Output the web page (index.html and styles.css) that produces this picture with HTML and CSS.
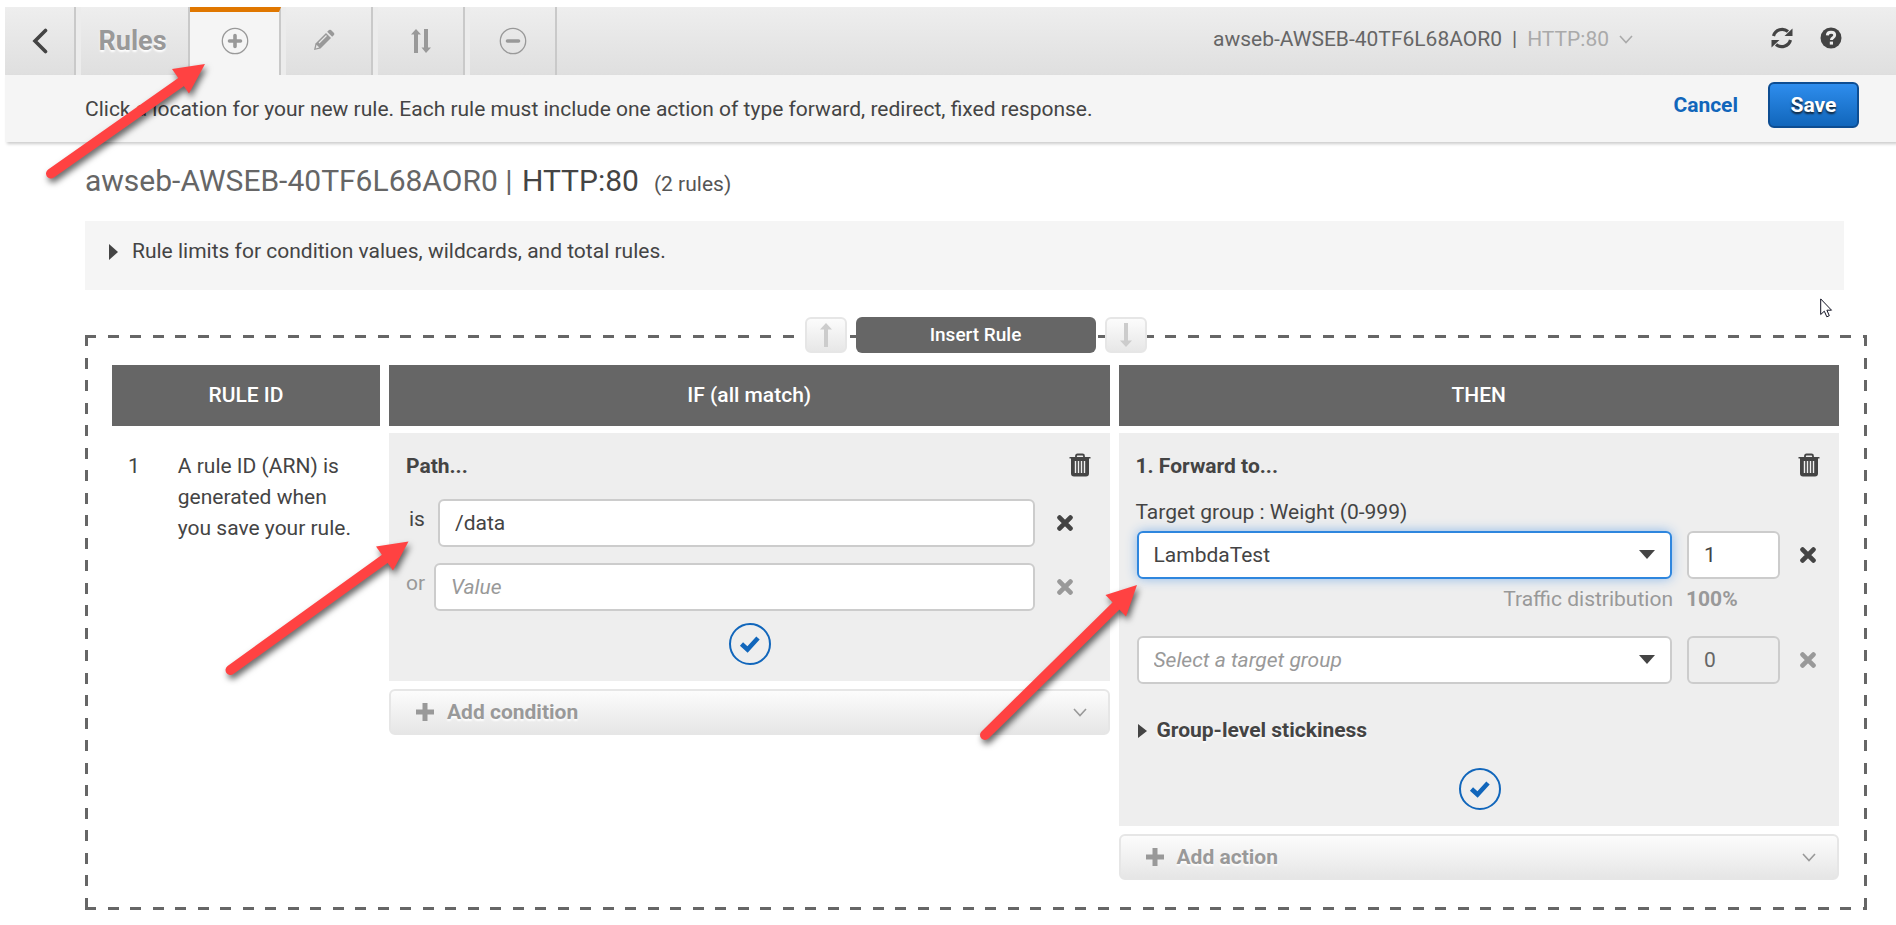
FILE: index.html
```html
<!DOCTYPE html>
<html lang="en">
<head>
<meta charset="utf-8">
<title>Rules | awseb-AWSEB-40TF6L68AOR0</title>
<link rel="stylesheet" href="styles.css">
</head>
<body>
<svg class="defs" width="0" height="0" aria-hidden="true">
  <symbol id="i-trash" viewBox="0 0 22 24">
    <path d="M7 4.500V3Q7 1.500 8.500 1.500H13.500Q15 1.500 15 3V4.500" fill="none" stroke="currentColor" stroke-width="1.800"/>
    <path d="M.5 4H21.500V5.600H20V20.500Q20 23.500 17 23.500H5Q2 23.500 2 20.500V5.600H.5Z" fill="currentColor"/>
    <path d="M6.500 8V20M9.500 8V20M12.500 8V20M15.500 8V20" stroke="#eee" stroke-width="1.400"/>
  </symbol>
  <symbol id="i-x" viewBox="0 0 16 16">
    <path d="M2.600 2.600L13.400 13.400M13.400 2.600L2.600 13.400" stroke="currentColor" stroke-width="4.800" stroke-linecap="round"/>
  </symbol>
  <symbol id="i-check" viewBox="0 0 22 18">
    <path d="M2.500 9L8.500 14.500L19 3" fill="none" stroke="currentColor" stroke-width="4.600"/>
  </symbol>
  <symbol id="i-plus" viewBox="0 0 18 18">
    <path d="M9 0V18M0 9H18" stroke="currentColor" stroke-width="5"/>
  </symbol>
  <symbol id="i-chevron" viewBox="0 0 14 9">
    <path d="M1 1L7 7.500L13 1" fill="none" stroke="currentColor" stroke-width="1.600"/>
  </symbol>
  <symbol id="i-arrow" viewBox="0 0 12 24">
    <path d="M6 0L12 6.500H8V24H4V6.500H0Z" fill="currentColor"/>
  </symbol>
</svg>

<div class="page">
  <header class="topbar">
    <nav class="tabs" aria-label="Rule tools">
      <button class="tab tab-back" aria-label="Back"><svg width="16" height="26" viewBox="0 0 16 26"><path d="M13.500 2.500L3 13L13.500 23.500" fill="none" stroke="#444" stroke-width="3.600" stroke-linecap="round"/></svg></button>
      <span class="tab tab-title">Rules</span>
      <button class="tab tab-active" aria-label="Add rule"><svg width="28" height="28" viewBox="0 0 28 28"><circle cx="14" cy="14" r="12.700" fill="none" stroke="#999" stroke-width="1.300"/><path d="M14 8.500V19.500M8.500 14H19.500" stroke="#999" stroke-width="3.600" stroke-linecap="round"/></svg></button>
      <button class="tab tab-edit" aria-label="Edit rules"><svg width="22" height="22" viewBox="0 0 22 22"><path d="M1 21L2.500 14.500L13 4L18 9L7.500 19.500Z" fill="#999"/><path d="M14.200 2.800L16 1Q17 .3 18 1L21 4Q21.700 5 21 6L19.200 7.800Z" fill="#999"/><path d="M2.600 19.400L3.600 15.800L6.200 18.400Z" fill="#e6e6e6"/><path d="M6 14L13.500 6.500" stroke="#e6e6e6" stroke-width="1.200"/></svg></button>
      <button class="tab" aria-label="Reorder rules"><svg width="20" height="26" viewBox="0 0 20 26"><path d="M5 1L10 6.500H7V25H3V6.500H0ZM15 25L20 19.500H17V1H13V19.500H10.500Z" fill="#999"/></svg></button>
      <button class="tab" aria-label="Delete rules"><svg width="28" height="28" viewBox="0 0 28 28"><circle cx="14" cy="14" r="12.700" fill="none" stroke="#999" stroke-width="1.300"/><path d="M8.500 14H19.500" stroke="#999" stroke-width="3.600" stroke-linecap="round"/></svg></button>
    </nav>
    <div class="top-right">
      <button class="listener"><span>awseb-AWSEB-40TF6L68AOR0</span><span>|</span><span class="pale">HTTP:80</span><svg class="pale" width="14" height="9"><use href="#i-chevron"/></svg></button>
      <button class="icon-btn" aria-label="Refresh"><svg width="22" height="22" viewBox="0 0 22 22"><path d="M2.500 9A9 9 0 0 1 17 4.500M19.500 13A9 9 0 0 1 5 17.500" fill="none" stroke="#444" stroke-width="3.200"/><path d="M21.500 1.500V9H13.500ZM.5 20.500V13H8.500Z" fill="#444"/></svg></button>
      <button class="icon-btn" aria-label="Help"><svg width="22" height="22" viewBox="0 0 22 22"><circle cx="11" cy="11" r="10.500" fill="#444"/><path d="M7.300 8.300Q7.500 5.200 11 5.200Q14.700 5.200 14.700 8.100Q14.700 9.700 13 10.700Q11.400 11.600 11.400 13" fill="none" stroke="#eee" stroke-width="2.900"/><path d="M9.800 14.600H13V17.600H9.800Z" fill="#eee"/></svg></button>
    </div>
  </header>

  <div class="subbar">
    <p class="hint">Click a location for your new rule. Each rule must include one action of type forward, redirect, fixed response.</p>
    <div class="actions">
      <a class="cancel" href="#">Cancel</a>
      <button class="save">Save</button>
    </div>
  </div>

  <main class="content">
    <h1 class="title">awseb-AWSEB-40TF6L68AOR0 | <span class="port">HTTP:80</span><span class="count">(2 rules)</span></h1>

    <button class="limits"><svg width="9" height="16" viewBox="0 0 9 16"><path d="M0 0L9 8L0 16Z" fill="#444"/></svg>Rule limits for condition values, wildcards, and total rules.</button>

    <section class="rule">
      <div class="insert">
        <button class="move" aria-label="Move up"><svg width="12" height="24"><use href="#i-arrow"/></svg></button>
        <button class="insert-label">Insert Rule</button>
        <button class="move" aria-label="Move down"><svg class="flip" width="12" height="24"><use href="#i-arrow"/></svg></button>
      </div>

      <div class="columns">
        <div class="col">
          <h2 class="col-head">RULE ID</h2>
          <div class="rule-id"><span>1</span><p class="rule-text">A rule ID (ARN) is generated when you save your rule.</p></div>
        </div>

        <div class="col">
          <h2 class="col-head">IF (all match)</h2>
          <div class="panel">
            <div class="panel-head"><h3 class="panel-title">Path...</h3><button class="icon-btn trash" aria-label="Delete condition"><svg width="22" height="24"><use href="#i-trash"/></svg></button></div>
            <div class="path-row path-first">
              <label class="path-label path-is" for="path1">is</label>
              <input class="field" id="path1" type="text" value="/data">
              <button class="path-x" aria-label="Remove value"><svg width="16" height="16"><use href="#i-x"/></svg></button>
            </div>
            <div class="path-row">
              <label class="path-label muted" for="path2">or</label>
              <input class="field" id="path2" type="text" placeholder="Value">
              <button class="path-x muted" aria-label="Remove value"><svg width="16" height="16"><use href="#i-x"/></svg></button>
            </div>
            <button class="confirm confirm-if" aria-label="Confirm condition"><svg width="22" height="18"><use href="#i-check"/></svg></button>
          </div>
          <button class="add"><svg width="18" height="18"><use href="#i-plus"/></svg>Add condition<svg class="add-chevron" width="14" height="9"><use href="#i-chevron"/></svg></button>
        </div>

        <div class="col">
          <h2 class="col-head">THEN</h2>
          <div class="panel">
            <div class="panel-head"><h3 class="panel-title">1. Forward to...</h3><button class="icon-btn trash" aria-label="Delete action"><svg width="22" height="24"><use href="#i-trash"/></svg></button></div>
            <label class="group-label" for="group1">Target group : Weight (0-999)</label>
            <div class="group-row">
              <div class="select-box">
                <select class="field focused" id="group1"><option>LambdaTest</option></select>
                <svg class="caret" width="16" height="9" viewBox="0 0 16 9"><path d="M0 0H16L8 9Z" fill="#444"/></svg>
              </div>
              <input class="field weight" type="text" value="1" aria-label="Weight">
              <button class="group-x" aria-label="Remove target group"><svg width="16" height="16"><use href="#i-x"/></svg></button>
            </div>
            <div class="traffic"><span>Traffic distribution</span><strong class="percent">100%</strong></div>
            <div class="group-row">
              <div class="select-box">
                <select class="field empty" id="group2" aria-label="Target group"><option>Select a target group</option></select>
                <svg class="caret" width="16" height="9" viewBox="0 0 16 9"><path d="M0 0H16L8 9Z" fill="#444"/></svg>
              </div>
              <input class="field weight" type="text" value="0" aria-label="Weight" disabled>
              <button class="group-x muted" aria-label="Remove target group"><svg width="16" height="16"><use href="#i-x"/></svg></button>
            </div>
            <button class="sticky"><svg width="9" height="14" viewBox="0 0 9 14"><path d="M0 0L9 7L0 14Z" fill="#444"/></svg>Group-level stickiness</button>
            <button class="confirm confirm-then" aria-label="Confirm action"><svg width="22" height="18"><use href="#i-check"/></svg></button>
          </div>
          <button class="add"><svg width="18" height="18"><use href="#i-plus"/></svg>Add action<svg class="add-chevron" width="14" height="9"><use href="#i-chevron"/></svg></button>
        </div>
      </div>
    </section>
  </main>
</div>

<svg class="notes" width="1200" height="760" viewBox="0 0 1200 760" aria-hidden="true">
  <g class="note"><path d="M51 173.500L184 80" /><polygon points="205,64 172,69 189,93.500"/></g>
  <g class="note"><path d="M230.500 670L386 558"/><polygon points="408.500,541.500 376,546.500 393,570.500"/></g>
  <g class="note"><path d="M985 735L1117 605"/><polygon points="1137,585 1105.500,595 1126,616.500"/></g>
</svg>
<svg class="pointer" width="13" height="20" viewBox="0 0 13 20" aria-hidden="true"><path d="M.7 .9V16.500L4.300 13.200L6.800 18.800L9.300 17.700L6.900 12.200H11.500Z" fill="#fff" stroke="#112" stroke-width="1"/></svg>
</body>
</html>
```

FILE: styles.css
```css
* { box-sizing: border-box; }

body {
  margin: 0;
  background: #fff;
  color: #444;
  font: 21px/31px Roboto, sans-serif;
}

button, input, select { font: inherit; color: inherit; margin: 0; }
button { padding: 0; border: 0; background: none; }
h1, h2, h3, p { margin: 0; }
svg { display: block; flex: none; }

.defs { position: absolute; }
.muted { color: #999; }
.page { padding: 7px 0 0 5px; }

/* Top bar */
.topbar {
  display: flex;
  justify-content: space-between;
  height: 68px;
  background: linear-gradient(#eee, #dfdfdf);
}
.tabs { display: flex; }
.tab {
  display: flex;
  align-items: center;
  justify-content: center;
  width: 92px;
  border-left: 5px solid #ececec;
  border-right: 2px solid #c9c9c9;
}
.tab-back { width: 71px; border-left: 0; }
.tab-title {
  width: 114px;
  padding-right: 4px;
  color: #999;
  font-size: 27px;
  font-weight: 700;
  text-shadow: 0 2px 2px #fff;
}
.tab-active {
  width: 91px;
  border-left: 0;
  border-top: 5px solid #e07700;
  padding-bottom: 5px;
  background: #f5f5f5;
}
.tab-edit { padding: 0 10px 3px 0; }
.top-right { display: flex; align-items: center; padding: 0 50px 6px 0; }
.listener { display: flex; align-items: center; gap: 10px; margin: 2px 134px 0 0; color: #666; }
.pale { color: #aaa; }
.icon-btn { display: flex; align-items: center; justify-content: center; width: 30px; height: 28px; }
.icon-btn + .icon-btn { margin-left: 19px; }

/* Sub bar */
.subbar {
  display: flex;
  justify-content: space-between;
  align-items: center;
  height: 67px;
  padding: 0 37px 0 80px;
  background: #f5f5f5;
  box-shadow: 2px 2px 3px #ccc;
}
.hint { padding-top: 2px; }
.actions { display: flex; align-items: center; gap: 30px; padding-bottom: 7px; }
.cancel { color: #1166bb; font-weight: 700; text-decoration: none; }
.save {
  width: 91px;
  height: 46px;
  border: 2px solid #0d4d92;
  border-radius: 6px;
  background: linear-gradient(#2e8ded, #1166bb);
  color: #fff;
  font-weight: 700;
  text-shadow: 0 2px 2px #123;
}

/* Content */
.content { padding: 21px 29px 15px 80px; }
.title { color: #666; font-size: 30px; font-weight: 400; line-height: 36px; }
.port { margin-left: 2px; color: #444; }
.count { margin-left: 15px; color: #555; font-size: 21px; line-height: 24px; }
.limits {
  display: flex;
  align-items: center;
  gap: 14px;
  width: calc(100% - 23px);
  margin: 22px 0 45px;
  padding: 15px 24px 23px;
  background: #f5f5f5;
  text-align: left;
}

/* Rule being inserted, framed by long dashes */
.rule {
  --dash: #666 0 11px, transparent 11px 23px, #666 23px 34px, transparent 34px;
  display: flow-root;
  padding: 0 28px 30px 27px;
  background:
    linear-gradient(90deg, var(--dash)) left top / 45px 3px repeat-x,
    linear-gradient(90deg, var(--dash)) left bottom / 45px 3px repeat-x,
    linear-gradient(180deg, var(--dash)) left top / 3px 45px repeat-y,
    linear-gradient(180deg, var(--dash)) right top / 3px 45px repeat-y;
}
.insert { display: flex; justify-content: center; gap: 9px; padding-bottom: 12px; margin-top: -18px; }
.move {
  display: flex;
  align-items: center;
  justify-content: center;
  width: 42px;
  height: 36px;
  border: 2px solid #e6e6e6;
  border-radius: 6px;
  background: linear-gradient(#fcfcfc, #e7e7e7);
  color: #ccc;
}
.flip { transform: rotate(180deg); }
.insert-label {
  width: 240px;
  height: 36px;
  padding-bottom: 2px;
  border-radius: 6px;
  background: #666;
  color: #fff;
  font-size: 19px;
  font-weight: 500;
}

.columns { display: grid; grid-template-columns: 268px 1fr 1fr; gap: 9px; align-items: start; }
.col-head {
  margin-bottom: 7px;
  padding: 15px 0;
  background: #666;
  color: #fff;
  font-size: 21px;
  font-weight: 500;
  text-align: center;
}
.rule-id { display: flex; gap: 38px; padding: 18px 16px; }
.rule-text { max-width: 180px; }

.panel { padding: 18px 15px 16px 17px; background: #eee; }
.panel-head { display: flex; justify-content: space-between; height: 31px; }
.panel-title { font-size: 21px; font-weight: 700; }

.field {
  flex: 1;
  min-width: 0;
  width: 100%;
  height: 48px;
  padding: 0 15px;
  border: 2px solid #ccc;
  border-radius: 6px;
  outline: 0;
  background: #fff;
  appearance: none;
}
.field::placeholder { color: #999; font-style: italic; opacity: 1; }

.path-row { display: flex; margin-top: 16px; }
.path-first { margin-top: 17px; }
.path-label { width: 28px; padding-top: 5px; }
.path-is { width: 32px; padding-left: 3px; }
.path-x { display: flex; align-items: center; justify-content: center; width: 60px; }

.group-label { display: block; margin: 15px 0 3px; }
.group-row { display: flex; }
.select-box { position: relative; flex: 1; margin: 0 15px 0 1px; }
.select-box .field { display: block; }
.caret { position: absolute; right: 17px; top: 19px; pointer-events: none; }
.focused { border-color: #2e86de; box-shadow: 0 0 12px #8db9ea; }
.empty { color: #999; font-style: italic; }
.weight { flex: none; width: 93px; }
.weight:disabled { background: #eee; color: #666; }
.group-x { display: flex; align-items: center; justify-content: center; width: 44px; padding-left: 11px; }
.traffic { display: flex; justify-content: flex-end; gap: 13px; margin: 5px 0 21px; color: #999; }
.percent { width: 138px; }
.sticky {
  display: flex;
  align-items: center;
  gap: 10px;
  margin-top: 31px;
  padding-left: 2px;
  font-weight: 700;
  text-shadow: 0 2px 2px #fff;
}

.confirm {
  display: flex;
  align-items: center;
  justify-content: center;
  width: 42px;
  height: 42px;
  border: 2px solid #1166bb;
  border-radius: 50%;
  color: #1166bb;
}
.confirm-if { margin: 12px auto 0; }
.confirm-then { margin: 22px auto 0; }

.add {
  display: flex;
  align-items: center;
  gap: 13px;
  width: 100%;
  height: 46px;
  margin-top: 8px;
  padding: 0 21px 0 25px;
  border: 2px solid #e6e6e6;
  border-radius: 6px;
  background: linear-gradient(#fcfcfc, #e6e6e6);
  color: #999;
  font-weight: 700;
  text-shadow: 0 2px 2px #fff;
}
.add-chevron { margin-left: auto; }

/* Annotations over the page */
.notes { position: absolute; left: 0; top: 0; pointer-events: none; }
.note { fill: #ff4242; filter: drop-shadow(2px 4px 3px rgba(0, 0, 0, .6)); }
.note path { stroke: #ff4242; stroke-width: 10; stroke-linecap: round; }
.pointer { position: absolute; left: 1820px; top: 298px; pointer-events: none; }
```
